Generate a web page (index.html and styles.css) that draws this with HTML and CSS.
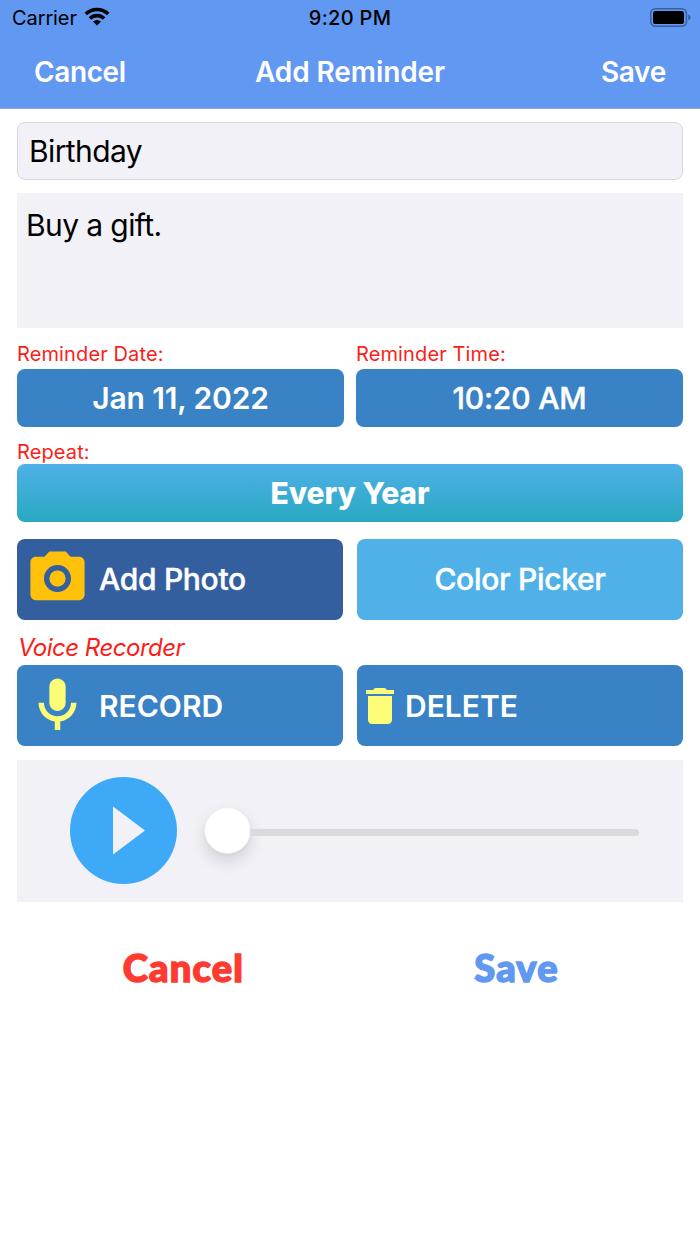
FILE: index.html
```html
<!DOCTYPE html>
<html lang="en">
<head>
<meta charset="utf-8">
<title>Add Reminder</title>
<link rel="stylesheet" href="styles.css">
</head>
<body>
<header class="header">
  <div class="status">
    <div class="carrier"><span class="carrier-name">Carrier</span>
      <svg class="wifi" viewBox="0 0 26 19" width="26" height="19"><g fill="none" stroke="#000" stroke-width="3.6"><path d="M1.8 7A16 16 0 0 1 24.2 7"/><path d="M5.9 11.5A10.2 10.2 0 0 1 20.1 11.5"/></g><path d="M9 14.6Q13 11.4 17 14.6L13 18.6Z"/></svg>
    </div>
    <div class="clock">9:20 PM</div>
    <svg class="battery" viewBox="0 0 41 19" width="41" height="19"><rect x=".75" y=".75" width="35.7" height="17.5" rx="4.7" fill="none" stroke="#3b5f9c" stroke-width="1.5"/><rect x="3" y="3" width="31" height="13" rx="2.6"/><path d="M38.2 6.4Q40.6 7.4 40.6 9.5T38.2 12.6Z" fill="#3b5f9c"/></svg>
  </div>
  <nav class="nav">
    <span class="nav-cancel">Cancel</span>
    <span class="nav-title">Add Reminder</span>
    <span class="nav-save">Save</span>
  </nav>
</header>
<main class="form">
  <div class="title-field"><span class="birthday">Birthday</span></div>
  <div class="notes"><span class="gift">Buy a gift.</span></div>
  <div class="schedule">
    <div><div class="label"><span class="lbl-date">Reminder Date:</span></div><div class="btn"><span class="date">Jan 11, 2022</span></div></div>
    <div><div class="label"><span class="lbl-time">Reminder Time:</span></div><div class="btn"><span class="time">10:20 AM</span></div></div>
  </div>
  <div class="label label-repeat"><span class="lbl-repeat">Repeat:</span></div>
  <div class="btn btn-repeat"><span class="every">Every Year</span></div>
  <div class="pair pair-photo">
    <div class="tile tile-photo">
      <svg class="icon camera" viewBox="0 0 24 24"><circle cx="12" cy="12" r="3"/><path d="M9 2L7.17 4H4c-1.1 0-2 .9-2 2v12c0 1.1.9 2 2 2h16c1.1 0 2-.9 2-2V6c0-1.1-.9-2-2-2h-3.17L15 2H9zm3 15c-2.76 0-5-2.24-5-5s2.24-5 5-5 5 2.24 5 5-2.24 5-5 5z"/></svg>
      <span class="photo">Add Photo</span>
    </div>
    <div class="tile tile-color"><span class="picker">Color Picker</span></div>
  </div>
  <div class="voice-label"><span class="voice">Voice Recorder</span></div>
  <div class="pair">
    <div class="tile">
      <svg class="icon mic" viewBox="0 0 24 24"><path d="M12 14c1.66 0 3-1.34 3-3V5c0-1.66-1.34-3-3-3S9 3.34 9 5v6c0 1.66 1.34 3 3 3z"/><path d="M17 11c0 2.76-2.24 5-5 5s-5-2.24-5-5H5c0 3.53 2.61 6.43 6 6.92V21h2v-3.08c3.39-.49 6-3.39 6-6.92h-2z"/></svg>
      <span class="record">RECORD</span>
    </div>
    <div class="tile">
      <svg class="icon trash" viewBox="0 0 24 24"><path d="M6 19c0 1.1.9 2 2 2h8c1.1 0 2-.9 2-2V7H6v12zM19 4h-3.5l-1-1h-5l-1 1H5v2h14V4z"/></svg>
      <span class="delete">DELETE</span>
    </div>
  </div>
  <div class="player">
    <svg class="play" viewBox="0 0 107 107" width="107" height="107"><circle cx="53.5" cy="53.5" r="53.5" fill="#3eaaf7"/><path d="M43 29.5L75 53.5L43 77.5Z" fill="#f2f1f7"/></svg>
    <div class="slider"><div class="thumb"></div><div class="track"></div></div>
  </div>
  <footer class="actions">
    <span class="cancel">Cancel</span>
    <span class="save">Save</span>
  </footer>
</main>
</body>
</html>
```
FILE: styles.css
```css
* { box-sizing: border-box; }
body { margin: 0; background: #fff; color: #000; font-family: Inter, "Liberation Sans", sans-serif; }
span { white-space: nowrap; }
svg { display: block; flex: none; }

.header { height: 109px; background: #6198f2; border-bottom: 1px solid #94abd5; }
.status { height: 35px; display: grid; grid-template-columns: 1fr auto 1fr; align-items: center; padding: 0 9px 0 12px; }
.carrier { display: flex; align-items: center; gap: 7px; font-size: 20px; letter-spacing: -0.1px; }
.wifi { margin-top: -2px; }
.clock { font-size: 20px; font-weight: 500; letter-spacing: 0.3px; margin-left: -3px; }
.battery { justify-self: end; margin-top: -1px; }
.nav { height: 73px; display: grid; grid-template-columns: 1fr auto 1fr; align-items: center; padding: 0 34px 0 34px; color: #fff; font-size: 28px; font-weight: 600; line-height: 34px; }
.nav-cancel { letter-spacing: -0.4px; }
.nav-title { letter-spacing: -0.1px; }
.nav-save { text-align: right; letter-spacing: -0.3px; }

.form { padding: 13px 17px 0; }
.title-field { height: 58px; border: 1px solid #d8d7dc; border-radius: 8px; background: #f2f1f7; padding-left: 11px; display: flex; align-items: center; font-size: 30px; letter-spacing: -0.6px; }
.notes { height: 135px; margin-top: 13px; background: #f2f1f7; padding: 14px 9px; font-size: 30px; line-height: 36px; letter-spacing: -0.6px; }
.schedule { display: grid; grid-template-columns: 1fr 1fr; gap: 12px; margin-top: 12px; }
.label { height: 29px; line-height: 28px; font-size: 20px; color: #fb1d18; letter-spacing: 0.12px; }
.label-repeat { height: 25px; margin-top: 12.5px; line-height: 27px; }
.btn { height: 57.5px; border-radius: 8px; background: #3a82c6; color: #fff; display: flex; align-items: center; justify-content: center; font-size: 30px; font-weight: 600; }
.date { letter-spacing: -0.15px; }
.time, .photo, .picker { -webkit-text-stroke: 0.4px currentColor; }
.time { font-weight: 500; letter-spacing: -0.15px; }
.btn-repeat { background: linear-gradient(#4fb0e8, #29a9c1); font-weight: 800; }
.every { letter-spacing: -0.1px; }
.pair { display: grid; grid-template-columns: 1fr 1fr; gap: 14px; }
.pair-photo { margin-top: 17px; }
.tile { height: 81px; border-radius: 8px; background: #3a82c6; color: #fff; display: flex; align-items: center; font-size: 30px; font-weight: 600; }
.tile-photo { background: #335f9e; font-weight: 500; letter-spacing: -0.3px; }
.tile-color { background: #4fb1e8; justify-content: center; font-weight: 500; letter-spacing: -0.3px; }
.icon { width: 65px; height: 65px; margin-left: 8px; margin-right: 9px; }
.camera { fill: #ffc10a; margin-top: -1px; }
.mic { fill: #fefd78; margin-top: -1px; }
.trash { fill: #fefd78; width: 48px; height: 48px; margin-left: -1px; margin-right: 1px; }
.voice-label { height: 45.5px; padding: 12px 0 0 1px; line-height: 32px; color: #fb1d18; font-size: 24px; font-style: italic; letter-spacing: -0.5px; }
.player { height: 142px; margin-top: 13.5px; padding: 0 44px 0 53px; background: #f2f1f7; display: flex; align-items: center; gap: 27px; }
.play { margin-top: -1px; }
.slider { flex: 1; display: flex; align-items: center; }
.thumb { width: 47px; height: 47px; flex: none; border-radius: 50%; background: #fff; border: 1px solid #ececf1; box-shadow: 0 8px 16px rgba(0,0,0,.12), 0 1px 3px rgba(0,0,0,.06); margin-top: -1px; }
.track { flex: 1; height: 7px; margin: 3px 0 0 -1px; background: #dad9de; border-radius: 0 4px 4px 0; }
.actions { height: 66px; margin-top: 33px; display: grid; grid-template-columns: 1fr 1fr; align-items: center; text-align: center; font-family: Lato, sans-serif; font-size: 38px; font-weight: 900; letter-spacing: 1.2px; -webkit-text-stroke: 1.5px currentColor; }
.actions span { margin-top: -1px; }
.cancel { color: #fe3b30; }
.save { color: #6198f2; }
```
